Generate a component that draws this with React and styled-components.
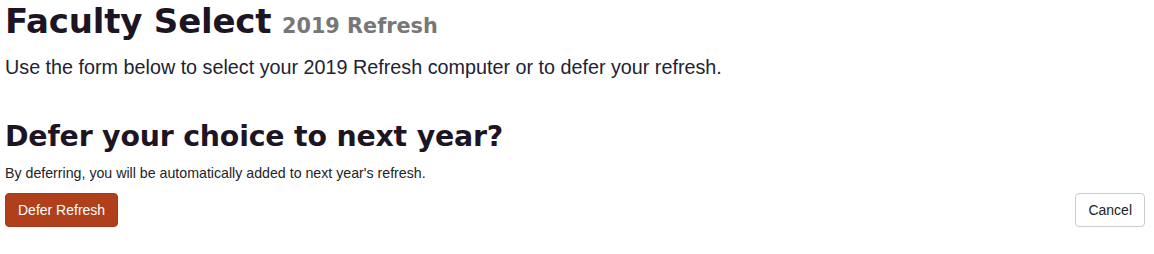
import React from 'react';
import styled, { createGlobalStyle } from 'styled-components';

const GlobalStyle = createGlobalStyle`
    body {
        margin: 0;
        background: #ffffff;
        font-family: "Liberation Sans", Arial, sans-serif;
        color: #212529;
    }
`;

const Page = styled.div`
    padding: 0 9px 0 5px;
`;

const Title = styled.h1`
    margin: 0;
    padding-top: 1px;
    font-family: "DejaVu Sans", sans-serif;
    font-weight: 700;
    font-size: 34px;
    line-height: 40px;
    color: #1d1424;
    letter-spacing: -0.2px;
`;

const Sub = styled.small`
    margin-left: -1px;
    font-size: 20.8px;
    line-height: 1;
    color: #777777;
    letter-spacing: 0;
`;

const Lead = styled.p`
    margin: 13px 0 0;
    font-size: 19.75px;
    font-weight: 300;
    line-height: 26px;
    color: #222233;
`;

const Heading = styled.h2`
    margin: 40px 0 0;
    font-family: "DejaVu Sans", sans-serif;
    font-weight: 700;
    font-size: 28.4px;
    line-height: 34px;
    color: #1d1424;
    letter-spacing: -0.2px;
`;

const Note = styled.p`
    margin: 10px 0 0;
    font-size: 14.2px;
    line-height: 18px;
    color: #212529;
`;

const Actions = styled.div`
    display: flex;
    justify-content: space-between;
    align-items: center;
    margin-top: 11px;
`;

const Button = styled.button`
    height: 34px;
    padding: 0 12px;
    font-family: "Liberation Sans", Arial, sans-serif;
    font-size: 14px;
    border-radius: 4px;
    cursor: pointer;
    background: ${({ primary }) => (primary ? '#b03f1c' : '#ffffff')};
    color: ${({ primary }) => (primary ? '#ffffff' : '#222222')};
    border: 1px solid ${({ primary }) => (primary ? '#a63a19' : '#cccccc')};
`;

export default function App() {
    return (
        <Page>
            <GlobalStyle />
            <Title>
                Faculty Select <Sub>2019 Refresh</Sub>
            </Title>
            <Lead>Use the form below to select your 2019 Refresh computer or to defer your refresh.</Lead>
            <Heading>Defer your choice to next year?</Heading>
            <Note>By deferring, you will be automatically added to next year's refresh.</Note>
            <Actions>
                <Button primary>Defer Refresh</Button>
                <Button>Cancel</Button>
            </Actions>
        </Page>
    );
}
